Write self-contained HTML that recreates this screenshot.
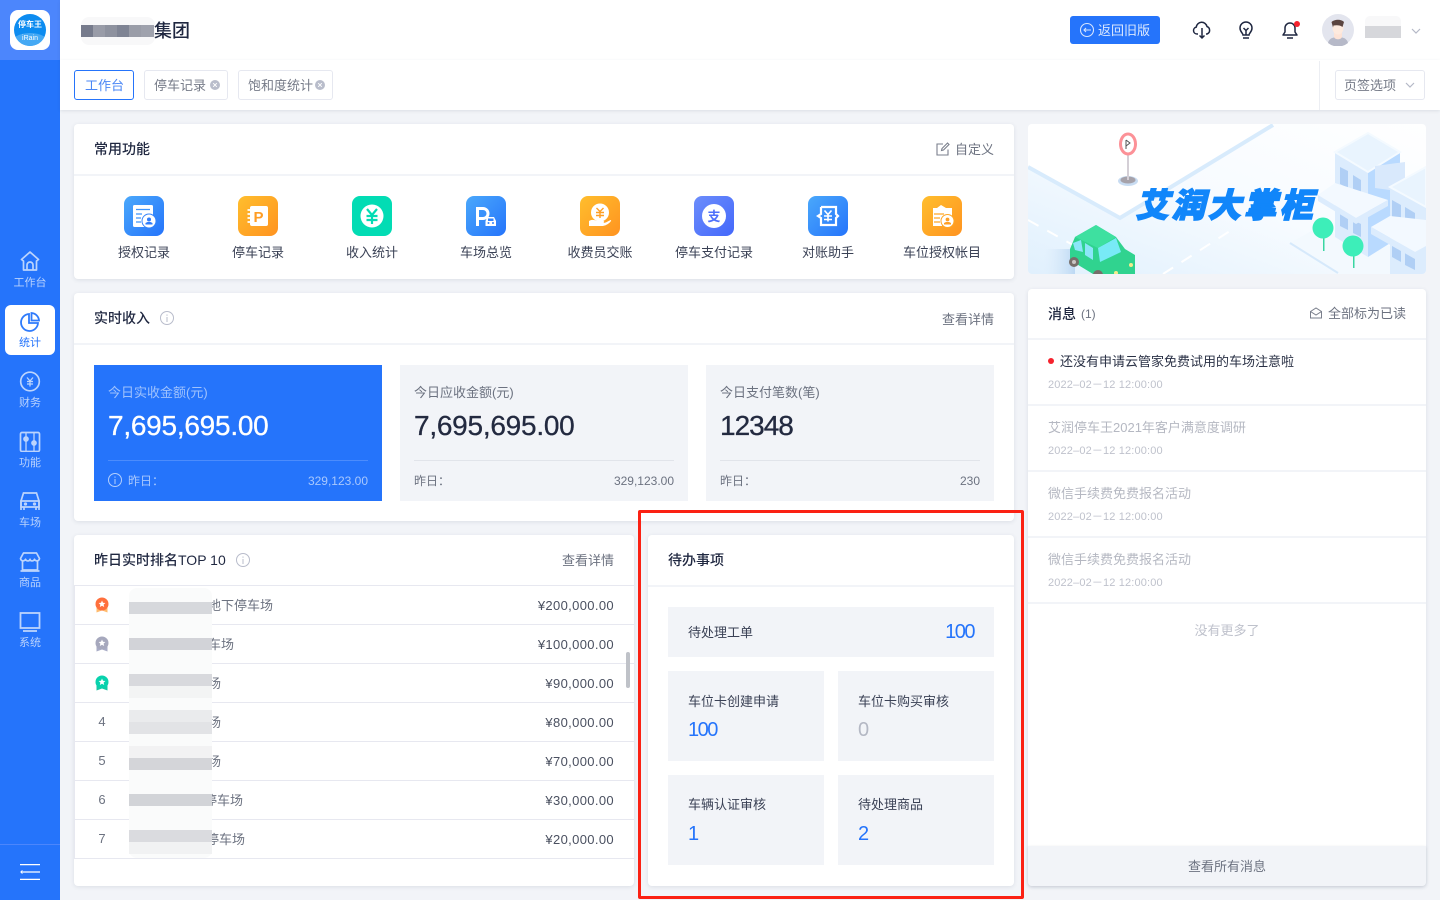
<!DOCTYPE html>
<html lang="zh"><head><meta charset="utf-8"><title>工作台</title>
<style>
*{margin:0;padding:0;box-sizing:border-box}
html,body{width:1440px;height:900px;overflow:hidden;background:#f2f4f8;font-family:"Liberation Sans","Noto Sans CJK SC",sans-serif;font-size:13px;color:#2a3145}
.a,.t{position:absolute}
.t{white-space:nowrap;line-height:18px}
.card{position:absolute;background:#fff;border-radius:4px;box-shadow:0 1px 4px rgba(60,70,100,.12)}
.hl{position:absolute;height:2px;background:#f2f4f8}
.ttl{font-size:14px;font-weight:500;color:#1f2740}
.g{color:#6c7280}
.sb{position:absolute;left:0;width:60px;text-align:center;font-size:11px;color:#b9d2fd;line-height:14px}
.sb svg{position:absolute;left:19px;top:0}
.sb span{position:absolute;left:0;width:60px;top:26px}
.ic{position:absolute;top:196px;width:40px;height:40px;border-radius:8px}
.ic svg{position:absolute;left:0;top:0}
.lb{position:absolute;top:244px;width:114px;text-align:center;line-height:18px;color:#3a4155}
.stat{position:absolute;top:365px;width:288px;height:136px;background:#f2f4f8}
.stat .t{color:#6c7280}
.stat .v{position:absolute;left:14px;top:44px;font-size:28px;line-height:34px;letter-spacing:-.25px;color:#232a40;-webkit-text-stroke:.3px currentColor;white-space:nowrap}
.stat .d{position:absolute;left:14px;right:14px;top:95px;height:1px;background:#e1e4ea}
.n12{font-size:12px}
.rw{position:absolute;left:74px;width:560px;height:1px;background:#e7e8f0}
.bl{position:absolute;background:#d4d6da}
.num{position:absolute;width:56px;text-align:center;left:74px;color:#6c7280;line-height:18px}
.amt{position:absolute;right:826px;color:#4a5060;white-space:nowrap;line-height:18px;letter-spacing:.35px}
.nm{position:absolute;color:#6c7280;white-space:nowrap;line-height:18px}
.td{position:absolute;background:#f2f4f8}
.td .t{left:20px;top:21px;color:#3a4155}
.td b{position:absolute;left:20px;top:45px;font-size:20px;font-weight:400;line-height:28px;color:#2574fb;letter-spacing:-1.500px}
.msg{position:absolute;left:1048px;line-height:18px;white-space:nowrap}
.dt{position:absolute;left:1048px;font-size:11px;color:#bfc2cc;line-height:14px;white-space:nowrap;letter-spacing:.15px}
</style></head><body>

<!-- sidebar -->
<div class="a" style="left:0;top:0;width:60px;height:900px;background:#2574fb"></div>
<div class="a" style="left:0;top:0;width:60px;height:60px;background:#4c86fc"></div>
<div class="a" style="left:10px;top:10px;width:40px;height:40px;background:#fff;border-radius:8px"></div>
<div class="a" style="left:14px;top:14px;width:32px;height:32px;border-radius:50%;background:#0d8cf0;overflow:hidden">
<div class="a" style="left:-4px;top:19px;width:40px;height:24px;border-radius:50%;background:#45a9f4"></div>
<div class="t" style="left:0;width:32px;text-align:center;top:4px;color:#fff;font-size:8px;font-weight:700;line-height:14px">停车王</div>
<div class="t" style="left:0;width:32px;text-align:center;top:19px;color:#fff;font-size:7px;line-height:11px">iRain</div>
</div>

<div class="sb" style="top:250px"><svg width="22" height="22" viewBox="0 0 22 22" fill="none" stroke="#bcd4fd" stroke-width="1.700"><path d="M11 2 2.500 9.500 4.500 11v9h13v-9l2-1.500z" stroke-linejoin="round"/><path d="M8 20v-5a3 3 0 0 1 6 0v5"/></svg><span>工作台</span></div>
<div class="a" style="left:5px;top:305px;width:50px;height:50px;background:#fff;border-radius:6px"></div>
<div class="sb" style="top:311px;color:#2574fb"><svg width="22" height="22" viewBox="0 0 22 22" fill="none" stroke="#2f7bfb" stroke-width="1.800"><path d="M10 3a8.500 8.500 0 1 0 9 9h-9z"/><path d="M12.500 2a8 8 0 0 1 7.500 7.500h-7.500z"/></svg><span style="top:25px">统计</span></div>
<div class="sb" style="top:370px"><svg width="22" height="22" viewBox="0 0 22 22" fill="none" stroke="#bcd4fd" stroke-width="1.700"><circle cx="11" cy="11.500" r="9.300"/><path d="M8 7.500l3 3.500 3-3.500M8 11.500h6M8 14h6M11 11v5.500" stroke-width="1.300"/></svg><span>财务</span></div>
<div class="sb" style="top:430px"><svg width="22" height="22" viewBox="0 0 22 22" fill="none" stroke="#bcd4fd" stroke-width="1.700"><rect x="1.500" y="2.500" width="19" height="19" rx="1.500"/><path d="M7 2.500v19M15 2.500v19" stroke-width="1.300"/><circle cx="7" cy="9" r="2" fill="#bcd4fd"/><circle cx="15" cy="13" r="2" fill="#bcd4fd"/></svg><span>功能</span></div>
<div class="sb" style="top:490px"><svg width="22" height="22" viewBox="0 0 22 22" fill="none" stroke="#bcd4fd" stroke-width="1.700"><path d="M2 20v-9l2.500-8h13l2.500 8v9"/><path d="M2 11h18v6H2z"/><path d="M5 20v-3M17 20v-3"/><circle cx="6.500" cy="14" r=".8" fill="#bcd4fd"/><circle cx="15.500" cy="14" r=".8" fill="#bcd4fd"/></svg><span>车场</span></div>
<div class="sb" style="top:550px"><svg width="22" height="22" viewBox="0 0 22 22" fill="none" stroke="#bcd4fd" stroke-width="1.700"><path d="M4.500 3h13l3 5.500c-.5 3-4 3-5 .8-1 2.200-4 2.200-4.500 0-.5 2.200-3.500 2.200-4.500 0-1 2.200-4.500 2.200-5-.8z" stroke-linejoin="round"/><path d="M3.500 11v9h15v-9"/><path d="M1.500 21h19"/></svg><span>商品</span></div>
<div class="sb" style="top:610px"><svg width="22" height="22" viewBox="0 0 22 22" fill="none" stroke="#bcd4fd" stroke-width="1.800"><rect x="1.500" y="3" width="19" height="15"/><path d="M4 21h14"/></svg><span>系统</span></div>
<div class="a" style="left:0;top:844px;width:60px;height:1px;background:#4c86fc"></div>
<svg class="a" style="left:20px;top:864px" width="20" height="16" viewBox="0 0 20 16" fill="none" stroke="#fff" stroke-width="1.200"><path d="M0 .6h20M2.500 8H20M0 15.400h20"/><path d="M2.500 6.600 1 8l1.500 1.400"/></svg>

<!-- header -->
<div class="a" style="left:60px;top:0;width:1380px;height:60px;background:#fff;box-shadow:0 1px 3px rgba(60,70,100,.12)"></div>
<div class="a" style="left:81px;top:17px;width:74px;height:28px;background:#f8f8f9;border-radius:8px"></div>
<div class="bl" style="left:81px;top:25px;width:12px;height:12px;background:#767b8c"></div>
<div class="bl" style="left:93px;top:25px;width:12px;height:12px;background:#999ca8"></div>
<div class="bl" style="left:105px;top:25px;width:12px;height:12px;background:#8e929f"></div>
<div class="bl" style="left:117px;top:25px;width:12px;height:12px;background:#7f8494"></div>
<div class="bl" style="left:129px;top:25px;width:12px;height:12px;background:#9a9da8"></div>
<div class="bl" style="left:141px;top:25px;width:13px;height:12px;background:#9fa2ad"></div>
<div class="t" style="left:154px;top:19px;font-size:18px;line-height:24px;color:#1f2740;font-weight:500">集团</div>

<div class="a" style="left:1070px;top:16px;width:90px;height:28px;background:#2574fb;border-radius:3px"></div>
<svg class="a" style="left:1079px;top:22px" width="16" height="16" viewBox="0 0 16 16" fill="none" stroke="#d5e4fe" stroke-width="1.100"><circle cx="8" cy="8" r="6.500"/><path d="M12 8H5M7 6 5 8l2 2"/></svg>
<div class="t" style="left:1098px;top:22px;color:#dbe8fe;font-size:13px">返回旧版</div>
<svg class="a" style="left:1192px;top:20px" width="20" height="20" viewBox="0 0 20 20" fill="none" stroke="#1f2740" stroke-width="1.500"><path d="M6 14H5a3.500 3.500 0 0 1-.8-6.900 5.500 5.500 0 0 1 10.800-.6A4 4 0 0 1 15 14h-1"/><path d="M10 8v10M7.500 15.500 10 18l2.500-2.500"/></svg>
<svg class="a" style="left:1236px;top:20px" width="20" height="20" viewBox="0 0 20 20" fill="none" stroke="#1f2740" stroke-width="1.500"><path d="M7 15c0-2-3-3-3-7a6 6 0 0 1 12 0c0 4-3 5-3 7z"/><path d="M7.500 8l2.500 2.500L12.500 8M10 10.500V15M7 18h6"/></svg>
<svg class="a" style="left:1280px;top:20px" width="20" height="20" viewBox="0 0 20 20" fill="none" stroke="#1f2740" stroke-width="1.500"><path d="M3 15h14l-2-3V8a5 5 0 0 0-10 0v4z" stroke-linejoin="round"/><path d="M7 18h6"/></svg>
<div class="a" style="left:1294px;top:21px;width:6px;height:6px;border-radius:50%;background:#f5222d"></div>
<svg class="a" style="left:1322px;top:14px" width="32" height="32" viewBox="0 0 32 32"><circle cx="16" cy="16" r="16" fill="#e3e5ee"/><path d="M6 29c1-5 6-6 10-6s9 1 10 6a16 16 0 0 1-20 0z" fill="#b6b9c8"/><path d="M12 16h8v7c-1 3-7 3-8 0z" fill="#fde3d6"/><ellipse cx="16" cy="14" rx="5.500" ry="6.500" fill="#fdeade"/><path d="M9.500 8c3-3 10-3 12.500 0l-1.500 5c-2-2-6-2-9-1.500l-.5 2z" fill="#5b4540"/></svg>
<div class="a" style="left:1365px;top:16px;width:36px;height:22px;background:#f8f8f9;border-radius:5px"></div>
<div class="a" style="left:1365px;top:26px;width:36px;height:12px;background:#d6d7db"></div>
<svg class="a" style="left:1411px;top:27px" width="10" height="8" viewBox="0 0 10 8" fill="none" stroke="#b4b8c6" stroke-width="1.200"><path d="M1 2l4 4 4-4"/></svg>

<!-- tabs -->
<div class="a" style="left:60px;top:60px;width:1380px;height:50px;background:#fff;box-shadow:0 1px 3px rgba(60,70,100,.12)"></div>
<div class="a" style="left:1319px;top:61px;width:1px;height:49px;background:#eceef3"></div>
<div class="a" style="left:74px;top:70px;width:60px;height:30px;border:1px solid #2574fb;border-radius:3px"></div>
<div class="t" style="left:85px;top:77px;color:#4b87f5;font-size:13px">工作台</div>
<div class="a" style="left:144px;top:70px;width:84px;height:30px;border:1px solid #e6e8f0;border-radius:3px"></div>
<div class="t" style="left:154px;top:77px;color:#767b88">停车记录</div>
<svg class="a" style="left:210px;top:80px" width="10" height="10" viewBox="0 0 10 10"><circle cx="5" cy="5" r="5" fill="#b9bdcb"/><path d="M3.200 3.200l3.600 3.600M6.800 3.200 3.200 6.800" stroke="#fff" stroke-width="1"/></svg>
<div class="a" style="left:238px;top:70px;width:95px;height:30px;border:1px solid #e6e8f0;border-radius:3px"></div>
<div class="t" style="left:248px;top:77px;color:#767b88">饱和度统计</div>
<svg class="a" style="left:315px;top:80px" width="10" height="10" viewBox="0 0 10 10"><circle cx="5" cy="5" r="5" fill="#b9bdcb"/><path d="M3.200 3.200l3.600 3.600M6.800 3.200 3.200 6.800" stroke="#fff" stroke-width="1"/></svg>
<div class="a" style="left:1335px;top:70px;width:90px;height:30px;border:1px solid #e6e8f0;border-radius:3px"></div>
<div class="t" style="left:1344px;top:77px;color:#767b88">页签选项</div>
<svg class="a" style="left:1405px;top:81px" width="10" height="8" viewBox="0 0 10 8" fill="none" stroke="#b4b8c6" stroke-width="1.200"><path d="M1 2l4 4 4-4"/></svg>

<!-- 常用功能 -->
<div class="card" style="left:74px;top:124px;width:940px;height:155px"></div>
<div class="hl" style="left:74px;top:174px;width:940px"></div>
<div class="t ttl" style="left:94px;top:140px">常用功能</div>
<svg class="a" style="left:936px;top:142px" width="14" height="14" viewBox="0 0 14 14" fill="none" stroke="#7a7f8c" stroke-width="1.100"><path d="M12 7.500V13H1V2h6"/><path d="M5.500 8.500 6 6.500 11.500 1l1.500 1.500L7.500 8z"/></svg>
<div class="t g" style="left:955px;top:141px">自定义</div>

<div class="ic" style="left:124px;background:linear-gradient(135deg,#4aa8fb,#2574fb)"><svg width="40" height="40" viewBox="0 0 40 40"><rect x="9" y="9" width="20" height="22" rx="1.500" fill="#fff"/><path d="M12 13.500h14M12 18h6M12 22h5M12 26h5" stroke="#3f95fb" stroke-width="1.200"/><circle cx="25" cy="25" r="7" fill="#fff" stroke="#3584fb"/><circle cx="25" cy="23.500" r="2" fill="#2f7dfb"/><path d="M21.500 28.500h7v-1.500l-2-1h-3l-2 1z" fill="#2f7dfb"/></svg></div>
<div class="lb" style="left:87px">授权记录</div>
<div class="ic" style="left:238px;background:linear-gradient(135deg,#ffbe2d,#ff9320)"><svg width="40" height="40" viewBox="0 0 40 40"><rect x="12" y="10" width="18" height="20" rx="2" fill="#fff"/><path d="M9.500 14h5M9.500 18h5M9.500 22h5M9.500 26h5" stroke="#fff" stroke-width="1.800"/><text x="15.500" y="26" font-family="Liberation Sans" font-weight="700" font-size="15" fill="#ff9d24">P</text></svg></div>
<div class="lb" style="left:201px">停车记录</div>
<div class="ic" style="left:352px;background:#02dcb4"><svg width="40" height="40" viewBox="0 0 40 40"><circle cx="20" cy="20" r="11.500" fill="#fff"/><path d="M15 13l5 6 5-6M14.500 20h11M14.500 24h11M20 19v9" fill="none" stroke="#02dcb4" stroke-width="2.200"/></svg></div>
<div class="lb" style="left:315px">收入统计</div>
<div class="ic" style="left:466px;background:linear-gradient(135deg,#4aa8fb,#2574fb)"><svg width="40" height="40" viewBox="0 0 40 40" fill="none"><path d="M11.500 30V12.500h5.500a5 5 0 0 1 0 10h-5" stroke="#fff" stroke-width="3"/><path d="M19.500 30v-5l2-4h6.500l2 4v5z" fill="#fff"/><rect x="22" y="22.500" width="5.500" height="2.500" fill="#3584fb"/><circle cx="22.500" cy="27" r="1" fill="#3584fb"/><circle cx="27" cy="27" r="1" fill="#3584fb"/></svg></div>
<div class="lb" style="left:429px">车场总览</div>
<div class="ic" style="left:580px;background:linear-gradient(135deg,#ffbe2d,#ff9320)"><svg width="40" height="40" viewBox="0 0 40 40"><circle cx="20" cy="16.500" r="9" fill="#fff"/><path d="M16.500 12l3.500 3.500 3.500-3.500M16 16.500h8M16 19.500h8M20 15.500V22" stroke="#ff9f25" stroke-width="1.400" fill="none"/><path d="M9 25c3-2 6-1 8 0h6c2 0 1 2 0 2 3 0 5-2 8-3 1 1-4 6-9 6H9z" fill="#fff"/></svg></div>
<div class="lb" style="left:543px">收费员交账</div>
<div class="ic" style="left:694px;background:linear-gradient(135deg,#6c8dfb,#4468fb)"><svg width="40" height="40" viewBox="0 0 40 40"><circle cx="20" cy="20" r="12" fill="#fff"/><text x="20" y="25" text-anchor="middle" font-family="Noto Sans CJK SC" font-weight="700" font-size="13" fill="#4f70fb">支</text></svg></div>
<div class="lb" style="left:657px">停车支付记录</div>
<div class="ic" style="left:808px;background:linear-gradient(135deg,#4aa8fb,#2574fb)"><svg width="40" height="40" viewBox="0 0 40 40" fill="none" stroke="#fff" stroke-width="2.200"><path d="M13 11h15v7l2 2-2 2v7H16M13 11v7l-3 2 3 2v7h3"/><path d="M16.500 14.500l3.500 4 3.500-4M16 20h8M16 23.500h8M20 18.500v7" stroke-width="1.600"/></svg></div>
<div class="lb" style="left:771px">对账助手</div>
<div class="ic" style="left:922px;background:linear-gradient(135deg,#ffbe2d,#ff9320)"><svg width="40" height="40" viewBox="0 0 40 40"><path d="M11 12h4l4-3 5 3h6v12H20v6h-9z" fill="#fff"/><path d="M12 18h10M12 22h6M12 26h6" stroke="#ffa727" stroke-width="1.300"/><circle cx="25.500" cy="25" r="6.500" fill="#fff" stroke="#ffa727"/><circle cx="25.500" cy="23.500" r="1.900" fill="#ff9f25"/><path d="M22 28.500h7v-1.500l-2-1h-3l-2 1z" fill="#ff9f25"/></svg></div>
<div class="lb" style="left:885px">车位授权帐目</div>

<!-- 实时收入 -->
<div class="card" style="left:74px;top:293px;width:940px;height:228px"></div>
<div class="hl" style="left:74px;top:343px;width:940px"></div>
<div class="t ttl" style="left:94px;top:309px">实时收入</div>
<svg class="a" style="left:160px;top:311px" width="14" height="14" viewBox="0 0 14 14" fill="none" stroke="#b8bccb"><circle cx="7" cy="7" r="6.500"/><path d="M7 6v5M7 3.500v1.300"/></svg>
<div class="t g" style="left:942px;top:311px">查看详情</div>

<div class="stat" style="left:94px;background:#2574fb">
<div class="t" style="left:14px;top:19px;color:#9fc2fd">今日实收金额(元)</div>
<div class="v" style="color:#fff">7,695,695.00</div>
<div class="d" style="background:#4c8cfc"></div>
<svg class="a" style="left:14px;top:108px" width="14" height="14" viewBox="0 0 14 14" fill="none" stroke="#b3cffd"><circle cx="7" cy="7" r="6.500"/><path d="M7 6v5M7 3.500v1.300"/></svg>
<div class="t" style="left:34px;top:107px;font-size:12px;color:#a9c8fd">昨日：</div>
<div class="t n12" style="right:14px;top:107px;color:#a9c8fd">329,123.00</div>
</div>
<div class="stat" style="left:400px">
<div class="t" style="left:14px;top:19px">今日应收金额(元)</div>
<div class="v">7,695,695.00</div>
<div class="d"></div>
<div class="t" style="left:14px;top:107px;font-size:12px">昨日：</div>
<div class="t n12" style="right:14px;top:107px">329,123.00</div>
</div>
<div class="stat" style="left:706px">
<div class="t" style="left:14px;top:19px">今日支付笔数(笔)</div>
<div class="v" style="letter-spacing:-1px">12348</div>
<div class="d"></div>
<div class="t" style="left:14px;top:107px;font-size:12px">昨日：</div>
<div class="t n12" style="right:14px;top:107px">230</div>
</div>

<!-- 排名 -->
<div class="card" style="left:74px;top:535px;width:560px;height:351px"></div>
<div class="t ttl" style="left:94px;top:551px">昨日实时排名TOP 10</div>
<svg class="a" style="left:236px;top:553px" width="14" height="14" viewBox="0 0 14 14" fill="none" stroke="#b8bccb"><circle cx="7" cy="7" r="6.500"/><path d="M7 6v5M7 3.500v1.300"/></svg>
<div class="t g" style="left:562px;top:552px">查看详情</div>
<div class="a" style="left:74px;top:585px;width:1px;height:274px;background:#e7e8f0"></div>
<div class="rw" style="top:585px"></div><div class="rw" style="top:624px"></div><div class="rw" style="top:663px"></div><div class="rw" style="top:702px"></div><div class="rw" style="top:741px"></div><div class="rw" style="top:780px"></div><div class="rw" style="top:819px"></div><div class="rw" style="top:858px"></div>

<svg class="a" style="left:95px;top:597px" width="14" height="16" viewBox="0 0 14 16"><path d="M1.500 9v6.500L7 13.500l5.500 2V9z" fill="#ffbb6e"/><circle cx="7" cy="7" r="6.500" fill="#ff6f3c"/><path d="M7 3.500l1 2.300 2.400.2-1.800 1.600.6 2.400L7 8.800l-2.200 1.200.6-2.400L3.600 6l2.400-.2z" fill="#fff"/></svg>
<svg class="a" style="left:95px;top:636px" width="14" height="16" viewBox="0 0 14 16"><path d="M1.500 9v6.500L7 13.500l5.500 2V9z" fill="#a9acc6"/><circle cx="7" cy="7" r="6.500" fill="#a6a8bd"/><path d="M7 3.500l1 2.300 2.400.2-1.800 1.600.6 2.400L7 8.800l-2.200 1.200.6-2.400L3.600 6l2.400-.2z" fill="#fff"/></svg>
<svg class="a" style="left:95px;top:675px" width="14" height="16" viewBox="0 0 14 16"><path d="M1.500 9v6.500L7 13.500l5.500 2V9z" fill="#18c8a4"/><circle cx="7" cy="7" r="6.500" fill="#08d2ad"/><path d="M7 3.500l1 2.300 2.400.2-1.800 1.600.6 2.400L7 8.800l-2.200 1.200.6-2.400L3.600 6l2.400-.2z" fill="#fff"/></svg>
<div class="num" style="top:713px">4</div>
<div class="num" style="top:752px">5</div>
<div class="num" style="top:791px">6</div>
<div class="num" style="top:830px">7</div>

<div class="nm" style="left:208px;top:597px">地下停车场</div>
<div class="nm" style="left:208px;top:636px">车场</div>
<div class="nm" style="left:208px;top:675px">场</div>
<div class="nm" style="left:208px;top:714px">场</div>
<div class="nm" style="left:208px;top:753px">场</div>
<div class="nm" style="left:204px;top:792px">停车场</div>
<div class="nm" style="left:206px;top:831px">停车场</div>

<div class="amt" style="top:597px">¥200,000.00</div>
<div class="amt" style="top:636px">¥100,000.00</div>
<div class="amt" style="top:675px">¥90,000.00</div>
<div class="amt" style="top:714px">¥80,000.00</div>
<div class="amt" style="top:753px">¥70,000.00</div>
<div class="amt" style="top:792px">¥30,000.00</div>
<div class="amt" style="top:831px">¥20,000.00</div>

<!-- blur -->
<div class="a" style="left:129px;top:588px;width:83px;height:270px;background:#fafbfb;border-radius:8px"></div>
<div class="bl" style="left:129px;top:602px;width:83px;height:12px;background:#d6d8dc"></div>
<div class="bl" style="left:129px;top:638px;width:83px;height:12px;background:#d2d3d8"></div>
<div class="bl" style="left:129px;top:674px;width:83px;height:12px;background:#d8d9dd"></div>
<div class="bl" style="left:129px;top:686px;width:83px;height:12px;background:#f3f4f4"></div>
<div class="bl" style="left:129px;top:710px;width:83px;height:12px;background:#eaebed"></div>
<div class="bl" style="left:129px;top:722px;width:83px;height:12px;background:#e2e3e6"></div>
<div class="bl" style="left:129px;top:746px;width:83px;height:12px;background:#f2f2f3"></div>
<div class="bl" style="left:129px;top:758px;width:83px;height:12px;background:#d4d5d9"></div>
<div class="bl" style="left:129px;top:794px;width:83px;height:12px;background:#d2d4d8"></div>
<div class="bl" style="left:129px;top:830px;width:83px;height:12px;background:#dadbdf"></div>
<div class="bl" style="left:129px;top:842px;width:83px;height:12px;background:#f1f2f3"></div>

<div class="a" style="left:626px;top:652px;width:4px;height:36px;background:#bfc2c8;border-radius:2px"></div>

<!-- 待办 -->
<div class="card" style="left:648px;top:535px;width:366px;height:351px"></div>
<div class="hl" style="left:648px;top:585px;width:366px"></div>
<div class="t ttl" style="left:668px;top:551px">待办事项</div>
<div class="td" style="left:668px;top:607px;width:326px;height:50px">
<div class="t" style="left:20px;top:17px">待处理工单</div>
<b style="left:auto;right:20px;top:11px">100</b></div>
<div class="td" style="left:668px;top:671px;width:156px;height:90px"><div class="t" style="top:22px">车位卡创建申请</div><b style="top:45px">100</b></div>
<div class="td" style="left:838px;top:671px;width:156px;height:90px"><div class="t" style="top:22px">车位卡购买审核</div><b style="color:#b4b8c4;top:45px">0</b></div>
<div class="td" style="left:668px;top:775px;width:156px;height:90px"><div class="t">车辆认证审核</div><b>1</b></div>
<div class="td" style="left:838px;top:775px;width:156px;height:90px"><div class="t">待处理商品</div><b>2</b></div>

<div class="a" style="left:638px;top:510px;width:386px;height:389px;border:3px solid #fb2113;border-radius:2px"></div>

<!-- banner -->
<svg class="a" style="left:1028px;top:124px;border-radius:4px" width="398" height="150" viewBox="0 0 398 150">
<defs><linearGradient id="bg" x1="0" y1="1" x2="1" y2="0"><stop offset="0" stop-color="#e0f0fd"/><stop offset=".5" stop-color="#f7fbff"/><stop offset="1" stop-color="#fff"/></linearGradient>
<linearGradient id="sh" x1="0" x2="1"><stop offset="0" stop-color="#dcecfb" stop-opacity="0"/><stop offset="1" stop-color="#bcd8f3"/></linearGradient></defs>
<rect width="398" height="150" fill="url(#bg)"/>
<path d="M0 0H245L92 94 0 43z" fill="#fff"/>
<path d="M0 43l92 51L245 1" fill="none" stroke="#d8ebfc" stroke-width="4"/>
<path d="M0 96l45 25M135 150 205 105" stroke="#fff" stroke-width="2" stroke-dasharray="12 10" fill="none"/>
<path d="M262 119 287 105 398 130v20H310z" fill="#f3f9fe"/>
<path d="M262 119l48 30" stroke="#d6e9fb" stroke-width="2" fill="none"/>
<ellipse cx="100" cy="57" rx="10" ry="5" fill="#c8dcf2"/><ellipse cx="100" cy="56" rx="7.500" ry="3.500" fill="#a6a2aa"/>
<rect x="99" y="28" width="2" height="28" fill="#d4cfd6"/>
<ellipse cx="100" cy="20" rx="7.500" ry="10" fill="#fff" stroke="#fc9197" stroke-width="3"/>
<path d="M98 16v9M98 16l4 3-4 3" stroke="#555" fill="none"/>
<!-- left building -->
<path d="M307 28l33 20v85l-33-20z" fill="#dcecfd"/>
<path d="M340 48l32-20v85l-32 20z" fill="#b9daff"/>
<path d="M307 28l33-19 32 19-32 20z" fill="#e9f4fe" stroke="#f4faff" stroke-width="2"/>
<path d="M312 43l8 4v17l-8-4zM325 51l8 5v16l-8-5zM312 88l8 4v14l-8-4zM325 96l8 4v13l-8-4z" fill="#b0cff5"/>
<path d="M347 42l30-4v30l-30-4z" fill="#d9e9fc"/>
<path d="M290 71l38 23 32-18-53-17z" fill="#f3f9ff"/>
<path d="M290 71l38 23v6l-38-23zM328 94l32-18v6l-32 18z" fill="#dcecfd"/>
<!-- right building -->
<path d="M362 63l36 20v67h-36z" fill="#dcecfd"/>
<path d="M362 63l36-20v40z" fill="#e9f4fe" stroke="#f4faff" stroke-width="2"/>
<path d="M364 76l9 5v17l-9-5zM377 83l10 6v17l-10-6zM364 119l9 5v14l-9-5zM377 128l10 5v13l-10-5z" fill="#b0cff5"/>
<path d="M343 103l44 25 11-6V96l-36-4z" fill="#f3f9ff"/>
<path d="M343 103l44 25v7l-44-25z" fill="#dcecfd"/>
<rect x="295" y="112" width="1.500" height="15" fill="#3ad6a2"/><circle cx="295" cy="104" r="10.500" fill="#3deeb9"/>
<rect x="325" y="130" width="1.500" height="14" fill="#3ad6a2"/><circle cx="325" cy="122" r="10.500" fill="#3deeb9"/>
<!-- car -->
<rect x="15" y="125" width="32" height="25" fill="url(#sh)"/>
<path d="M42 125l5-12 21-12 20 12 9 12 10 6v19H65l-23-14z" fill="#30d38f"/>
<path d="M47 113l21-12 20 12-18 11z" fill="#3ee0a0"/>
<path d="M45 119l8-3 2 12-8-2zM57 119l8 5v12l-8-5z" fill="#8be6f8"/>
<path d="M70 124l18-10 5 14-21 10z" fill="#78eaf6"/>
<circle cx="46" cy="138" r="5" fill="#776e6a"/><circle cx="46" cy="138" r="2" fill="#c9c5c3"/><circle cx="70" cy="151" r="5" fill="#776e6a"/>
<circle cx="103" cy="141" r="2" fill="#f4ec8d"/><circle cx="88" cy="149" r="2" fill="#f4ec8d"/>
<text x="131" y="93" transform="skewX(-14)" font-family="Noto Sans CJK SC" font-weight="900" font-size="33" letter-spacing="3" fill="#1186fa" stroke="#1186fa" stroke-width="1.500">艾润大掌柜</text>
</svg>

<!-- 消息 -->
<div class="card" style="left:1028px;top:289px;width:398px;height:597px"></div>
<div class="t ttl" style="left:1048px;top:305px">消息</div>
<div class="t g" style="left:1081px;top:305px;font-size:12px">(1)</div>
<svg class="a" style="left:1310px;top:307px" width="12" height="12" viewBox="0 0 12 12" fill="none" stroke="#7a7f8c"><path d="M.5 4.500 6 1l5.500 3.500V11H.5zM.5 4.500 6 8l5.500-3.500"/></svg>
<div class="t g" style="left:1328px;top:305px">全部标为已读</div>
<div class="hl" style="left:1028px;top:338px;width:398px"></div>
<div class="a" style="left:1048px;top:358px;width:6px;height:6px;border-radius:50%;background:#f5222d"></div>
<div class="msg" style="left:1060px;top:353px;color:#2a3145">还没有申请云管家免费试用的车场注意啦</div>
<div class="dt" style="top:378px">2022–02－12 12:00:00</div>
<div class="hl" style="left:1028px;top:404px;width:398px"></div>
<div class="msg" style="top:419px;color:#b5b8c2">艾润停车王2021年客户满意度调研</div>
<div class="dt" style="top:444px">2022–02－12 12:00:00</div>
<div class="hl" style="left:1028px;top:470px;width:398px"></div>
<div class="msg" style="top:485px;color:#b5b8c2">微信手续费免费报名活动</div>
<div class="dt" style="top:510px">2022–02－12 12:00:00</div>
<div class="hl" style="left:1028px;top:536px;width:398px"></div>
<div class="msg" style="top:551px;color:#b5b8c2">微信手续费免费报名活动</div>
<div class="dt" style="top:576px">2022–02－12 12:00:00</div>
<div class="hl" style="left:1028px;top:602px;width:398px"></div>
<div class="t" style="left:1028px;width:398px;text-align:center;top:622px;color:#bfc2cc">没有更多了</div>
<div class="a" style="left:1028px;top:846px;width:398px;height:40px;background:#f2f4f8;border-radius:0 0 4px 4px;box-shadow:0 1px 3px rgba(60,70,100,.14)"></div>
<div class="t g" style="left:1028px;width:398px;text-align:center;top:858px">查看所有消息</div>
</body></html>
